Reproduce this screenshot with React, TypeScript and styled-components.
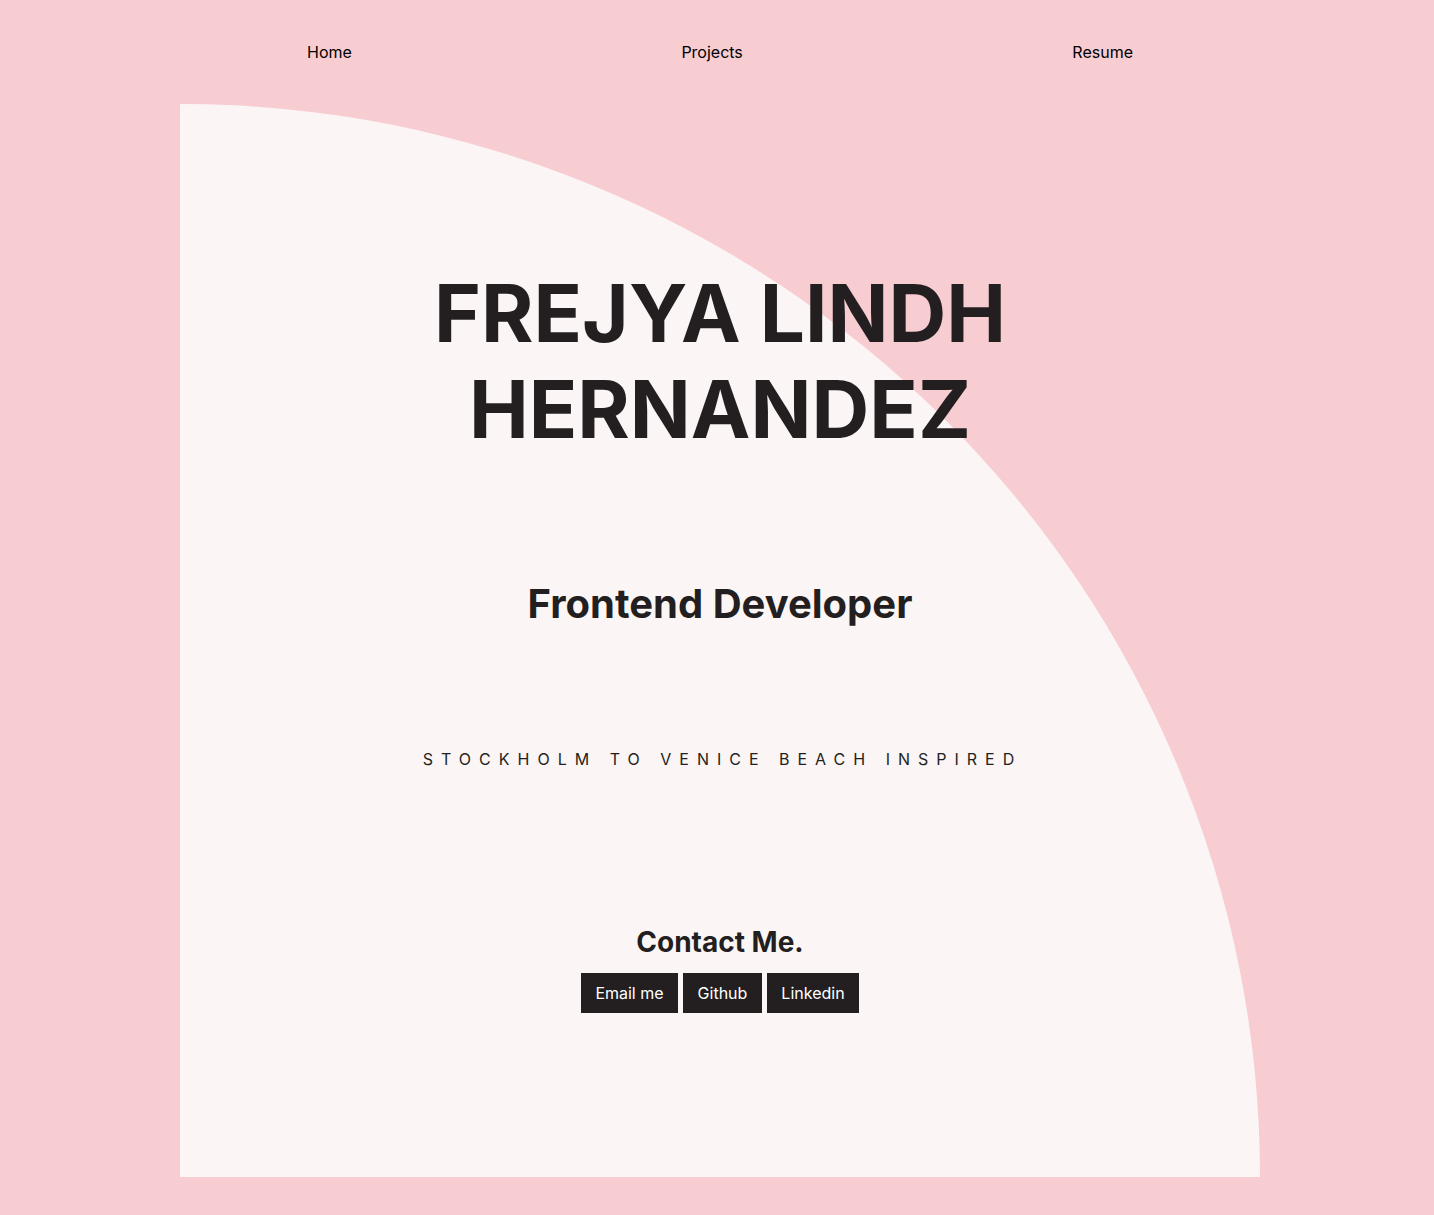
import React from "react";
import styled, { createGlobalStyle } from "styled-components";

const Global = createGlobalStyle`
  html, body {
    margin: 0;
    padding: 0;
    background: #f7cdd2;
  }
  body {
    font-family: Inter, "Noto Sans", "Liberation Sans", sans-serif;
    color: #231f20;
  }
`;

const Page = styled.div`
  min-height: 1215px;
  padding: 0 0 38px 0;
  box-sizing: border-box;
`;

const Nav = styled.nav`
  height: 104px;
  display: flex;
  align-items: center;
  justify-content: space-between;
  padding: 0 301px 0 307px;
  box-sizing: border-box;
`;

const NavLink = styled.a`
  font-size: 16px;
  color: #000;
  text-decoration: none;
  line-height: normal;
`;

const Card = styled.main`
  margin-left: 180px;
  width: 1080px;
  height: 1073px;
  box-sizing: border-box;
  background: #fcf5f5;
  border-top-right-radius: 100% 100%;
  display: flex;
  flex-direction: column;
  align-items: center;
  padding-top: 161px;
  text-align: center;
`;

const Name = styled.h1`
  margin: 0;
  font-size: 80px;
  line-height: 96px;
  font-weight: 700;
  max-width: 640px;
`;

const Role = styled.h2`
  margin: 123px 0 0;
  font-size: 40px;
  font-weight: 700;
  line-height: 48px;
`;

const Tagline = styled.p`
  margin: 121px 0 0;
  font-size: 16px;
  line-height: 20px;
  letter-spacing: 8px;
  text-transform: uppercase;
  padding-left: 5px;
`;

const ContactTitle = styled.h3`
  margin: 156px 0 0;
  font-size: 28px;
  font-weight: 700;
  line-height: 34px;
`;

const Buttons = styled.div`
  margin-top: 14px;
  display: flex;
  gap: 5px;
`;

const Button = styled.a`
  display: inline-flex;
  align-items: center;
  justify-content: center;
  height: 40px;
  padding: 0 14.5px;
  background: #231f20;
  color: #fff;
  font-size: 16px;
  text-decoration: none;
`;

export default function App() {
  return (
    <Page>
      <Global />
      <Nav>
        <NavLink href="#">Home</NavLink>
        <NavLink href="#">Projects</NavLink>
        <NavLink href="#">Resume</NavLink>
      </Nav>
      <Card>
        <Name>FREJYA LINDH HERNANDEZ</Name>
        <Role>Frontend Developer</Role>
        <Tagline>Stockholm to Venice Beach inspired</Tagline>
        <ContactTitle>Contact Me.</ContactTitle>
        <Buttons>
          <Button href="#">Email me</Button>
          <Button href="#">Github</Button>
          <Button href="#">Linkedin</Button>
        </Buttons>
      </Card>
    </Page>
  );
}
